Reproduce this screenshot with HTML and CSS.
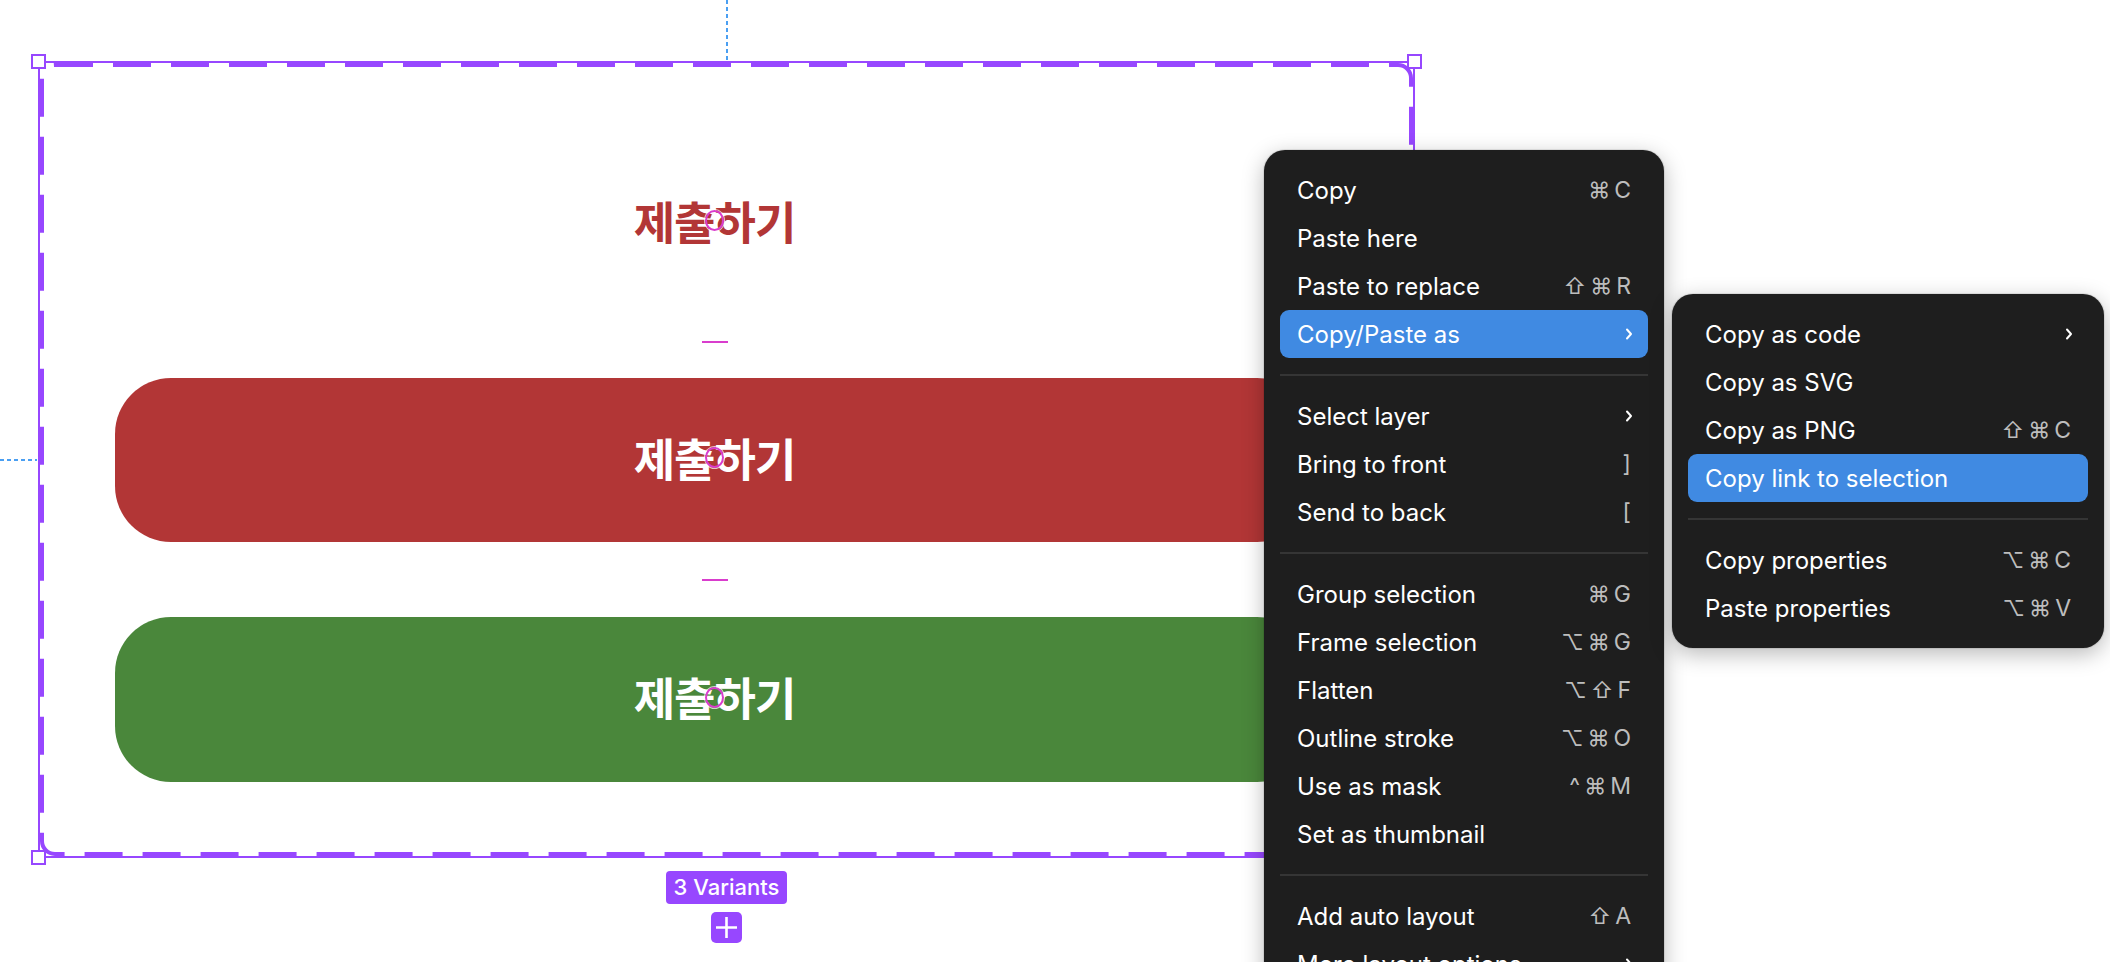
FILE: index.html
```html
<!DOCTYPE html>
<html lang="ko">
<head>
<meta charset="utf-8">
<title>Variants</title>
<link rel="stylesheet" href="styles.css">
</head>
<body>
<div class="canvas">
  <div class="guide guide-v"></div>
  <div class="guide guide-h"></div>

  <div class="set">
    <div class="frame">
      <svg class="dash" width="1373" height="793" viewBox="0 0 1373 793">
        <rect x="2" y="2" width="1369" height="789" rx="13" ry="13" fill="none" stroke="#9747ff" stroke-width="4" stroke-dasharray="38 20"/>
      </svg>
      <span class="handle tl"></span>
      <span class="handle tr"></span>
      <span class="handle bl"></span>
      <span class="handle br"></span>

      <div class="variant ghost"><span class="label">제출하기<i class="ring"></i></span></div>
      <div class="gap gap1"><i class="spacing"></i></div>
      <div class="variant red"><span class="label">제출하기<i class="ring"></i></span></div>
      <div class="gap gap2"><i class="spacing"></i></div>
      <div class="variant green"><span class="label">제출하기<i class="ring"></i></span></div>
    </div>
    <div class="badge">3 Variants</div>
    <div class="add">
      <svg width="31" height="31" viewBox="0 0 31 31"><path d="M15.5 5 V26 M5 15.5 H26" stroke="#fff" stroke-width="2.6" fill="none"/></svg>
    </div>
  </div>

  <div class="menu main-menu">
    <div class="item"><span>Copy</span><span class="keys"><b class="sym">⌘</b><b>C</b></span></div>
    <div class="item"><span>Paste here</span></div>
    <div class="item"><span>Paste to replace</span><span class="keys"><b class="sym">⇧</b><b class="sym">⌘</b><b>R</b></span></div>
    <div class="item active"><span>Copy/Paste as</span><svg class="chev" width="8" height="12" viewBox="0 0 8 12"><path d="M2 1.5 L6 6 L2 10.5" stroke="#fff" stroke-width="2" fill="none" stroke-linecap="round" stroke-linejoin="round"/></svg></div>
    <div class="sep"></div>
    <div class="item"><span>Select layer</span><svg class="chev" width="8" height="12" viewBox="0 0 8 12"><path d="M2 1.5 L6 6 L2 10.5" stroke="#fff" stroke-width="2" fill="none" stroke-linecap="round" stroke-linejoin="round"/></svg></div>
    <div class="item"><span>Bring to front</span><span class="keys"><b>]</b></span></div>
    <div class="item"><span>Send to back</span><span class="keys"><b>[</b></span></div>
    <div class="sep"></div>
    <div class="item"><span>Group selection</span><span class="keys"><b class="sym">⌘</b><b>G</b></span></div>
    <div class="item"><span>Frame selection</span><span class="keys"><b class="sym">⌥</b><b class="sym">⌘</b><b>G</b></span></div>
    <div class="item"><span>Flatten</span><span class="keys"><b class="sym">⌥</b><b class="sym">⇧</b><b>F</b></span></div>
    <div class="item"><span>Outline stroke</span><span class="keys"><b class="sym">⌥</b><b class="sym">⌘</b><b>O</b></span></div>
    <div class="item"><span>Use as mask</span><span class="keys"><b>^</b><b class="sym">⌘</b><b>M</b></span></div>
    <div class="item"><span>Set as thumbnail</span></div>
    <div class="sep"></div>
    <div class="item"><span>Add auto layout</span><span class="keys"><b class="sym">⇧</b><b>A</b></span></div>
    <div class="item"><span>More layout options</span><svg class="chev" width="8" height="12" viewBox="0 0 8 12"><path d="M2 1.5 L6 6 L2 10.5" stroke="#fff" stroke-width="2" fill="none" stroke-linecap="round" stroke-linejoin="round"/></svg></div>
    <div class="item"><span>Remove auto layout</span></div>
  </div>

  <div class="menu sub-menu">
    <div class="item"><span>Copy as code</span><svg class="chev" width="8" height="12" viewBox="0 0 8 12"><path d="M2 1.5 L6 6 L2 10.5" stroke="#fff" stroke-width="2" fill="none" stroke-linecap="round" stroke-linejoin="round"/></svg></div>
    <div class="item"><span>Copy as SVG</span></div>
    <div class="item"><span>Copy as PNG</span><span class="keys"><b class="sym">⇧</b><b class="sym">⌘</b><b>C</b></span></div>
    <div class="item active"><span>Copy link to selection</span></div>
    <div class="sep"></div>
    <div class="item"><span>Copy properties</span><span class="keys"><b class="sym">⌥</b><b class="sym">⌘</b><b>C</b></span></div>
    <div class="item"><span>Paste properties</span><span class="keys"><b class="sym">⌥</b><b class="sym">⌘</b><b>V</b></span></div>
  </div>
</div>
</body>
</html>
```

FILE: styles.css
```css
html, body {
  margin: 0;
  padding: 0;
  background: #ffffff;
  overflow: hidden;
}

.canvas {
  position: relative;
  width: 2110px;
  height: 962px;
  overflow: hidden;
  background: #ffffff;
  font-family: Inter, "Noto Sans", sans-serif;
}

/* guides */
.guide {
  position: absolute;
}
.guide-v {
  left: 726px;
  top: 0;
  width: 2px;
  height: 60px;
  background: repeating-linear-gradient(to bottom, #4a9ff2 0 4px, transparent 4px 7px);
}
.guide-h {
  left: 0;
  top: 459px;
  width: 37px;
  height: 2px;
  background: repeating-linear-gradient(to right, #4a9ff2 0 4px, transparent 4px 7px);
}

/* component set */
.set {
  position: absolute;
  left: 38px;
  top: 61px;
  display: flex;
  flex-direction: column;
  align-items: center;
  z-index: 1;
}

.frame {
  position: relative;
  box-sizing: border-box;
  width: 1377px;
  height: 797px;
  border: 2px solid #9747ff;
  padding: 78px 0 0 75px;
  display: flex;
  flex-direction: column;
  align-items: flex-start;
}

.dash {
  position: absolute;
  left: 0;
  top: 0;
  display: block;
}

.handle {
  position: absolute;
  width: 15px;
  height: 15px;
  box-sizing: border-box;
  background: #ffffff;
  border: 2px solid #9747ff;
  z-index: 2;
}
.handle.tl { left: -9px; top: -9px; }
.handle.tr { right: -9px; top: -9px; }
.handle.bl { left: -9px; bottom: -9px; }
.handle.br { right: -9px; bottom: -9px; }

.variant {
  width: 1198px;
  height: 164px;
  border-radius: 56px;
  display: flex;
  align-items: center;
  justify-content: center;
  flex: none;
}
.variant.ghost { color: #b23636; }
.variant.red { background: #b23636; color: #ffffff; }
.variant.green { background: #4a873b; color: #ffffff; height: 165px; }

.label {
  position: relative;
  font-family: "Noto Sans CJK KR", sans-serif;
  font-weight: 700;
  font-size: 45px;
  line-height: 1;
  letter-spacing: -1px;
  padding-left: 1px;
  margin-top: -6px;
}

.ring {
  position: absolute;
  left: 50%;
  top: 50%;
  width: 19px;
  height: 21px;
  margin-left: -9px;
  margin-top: -10px;
  box-sizing: border-box;
  border: 2.5px solid #d93dcd;
  border-radius: 50%;
  box-shadow: 0 0 0 1px rgba(255, 255, 255, 0.7);
}

.gap {
  width: 1198px;
  display: flex;
  align-items: center;
  justify-content: center;
  flex: none;
}
.gap1 { height: 73px; }
.gap2 { height: 75px; }

.spacing {
  width: 26px;
  height: 2px;
  background: #d93dcd;
  margin-left: 2px;
}

.badge {
  margin-top: 13px;
  height: 33px;
  padding: 0 8px;
  box-sizing: border-box;
  background: #9747ff;
  border-radius: 4px;
  color: #ffffff;
  font-family: Inter, sans-serif;
  font-weight: 500;
  font-size: 22px;
  line-height: 33px;
  white-space: nowrap;
}

.add {
  margin-top: 8px;
  width: 31px;
  height: 31px;
  background: #9747ff;
  border-radius: 5px;
}
.add svg { display: block; }

/* menus */
.menu {
  position: absolute;
  z-index: 10;
  box-sizing: border-box;
  padding: 16px;
  background: #1e1e1e;
  border-radius: 21px;
  box-shadow: 0 6px 22px rgba(0, 0, 0, 0.28), 0 0 0 1px rgba(0, 0, 0, 0.08);
  font-family: Inter, sans-serif;
  color: #ffffff;
  display: flex;
  flex-direction: column;
}
.main-menu {
  left: 1264px;
  top: 150px;
  width: 400px;
}
.sub-menu {
  left: 1672px;
  top: 294px;
  width: 432px;
}

.item {
  height: 48px;
  padding: 0 17px;
  display: flex;
  align-items: center;
  justify-content: space-between;
  border-radius: 9px;
  font-size: 24px;
  white-space: nowrap;
  flex: none;
}
.item.active {
  background: #408ae2;
}

.sep {
  height: 2px;
  margin: 16px 0;
  background: #353535;
  flex: none;
}

.keys {
  display: flex;
  align-items: center;
  gap: 4px;
  color: #bdbdbd;
  font-size: 23px;
}
.keys b {
  font-weight: 400;
}
.keys .sym {
  font-family: Inter, "DejaVu Sans", sans-serif;
  font-size: 22px;
}

.chev {
  display: block;
  margin-right: -2px;
}
```
